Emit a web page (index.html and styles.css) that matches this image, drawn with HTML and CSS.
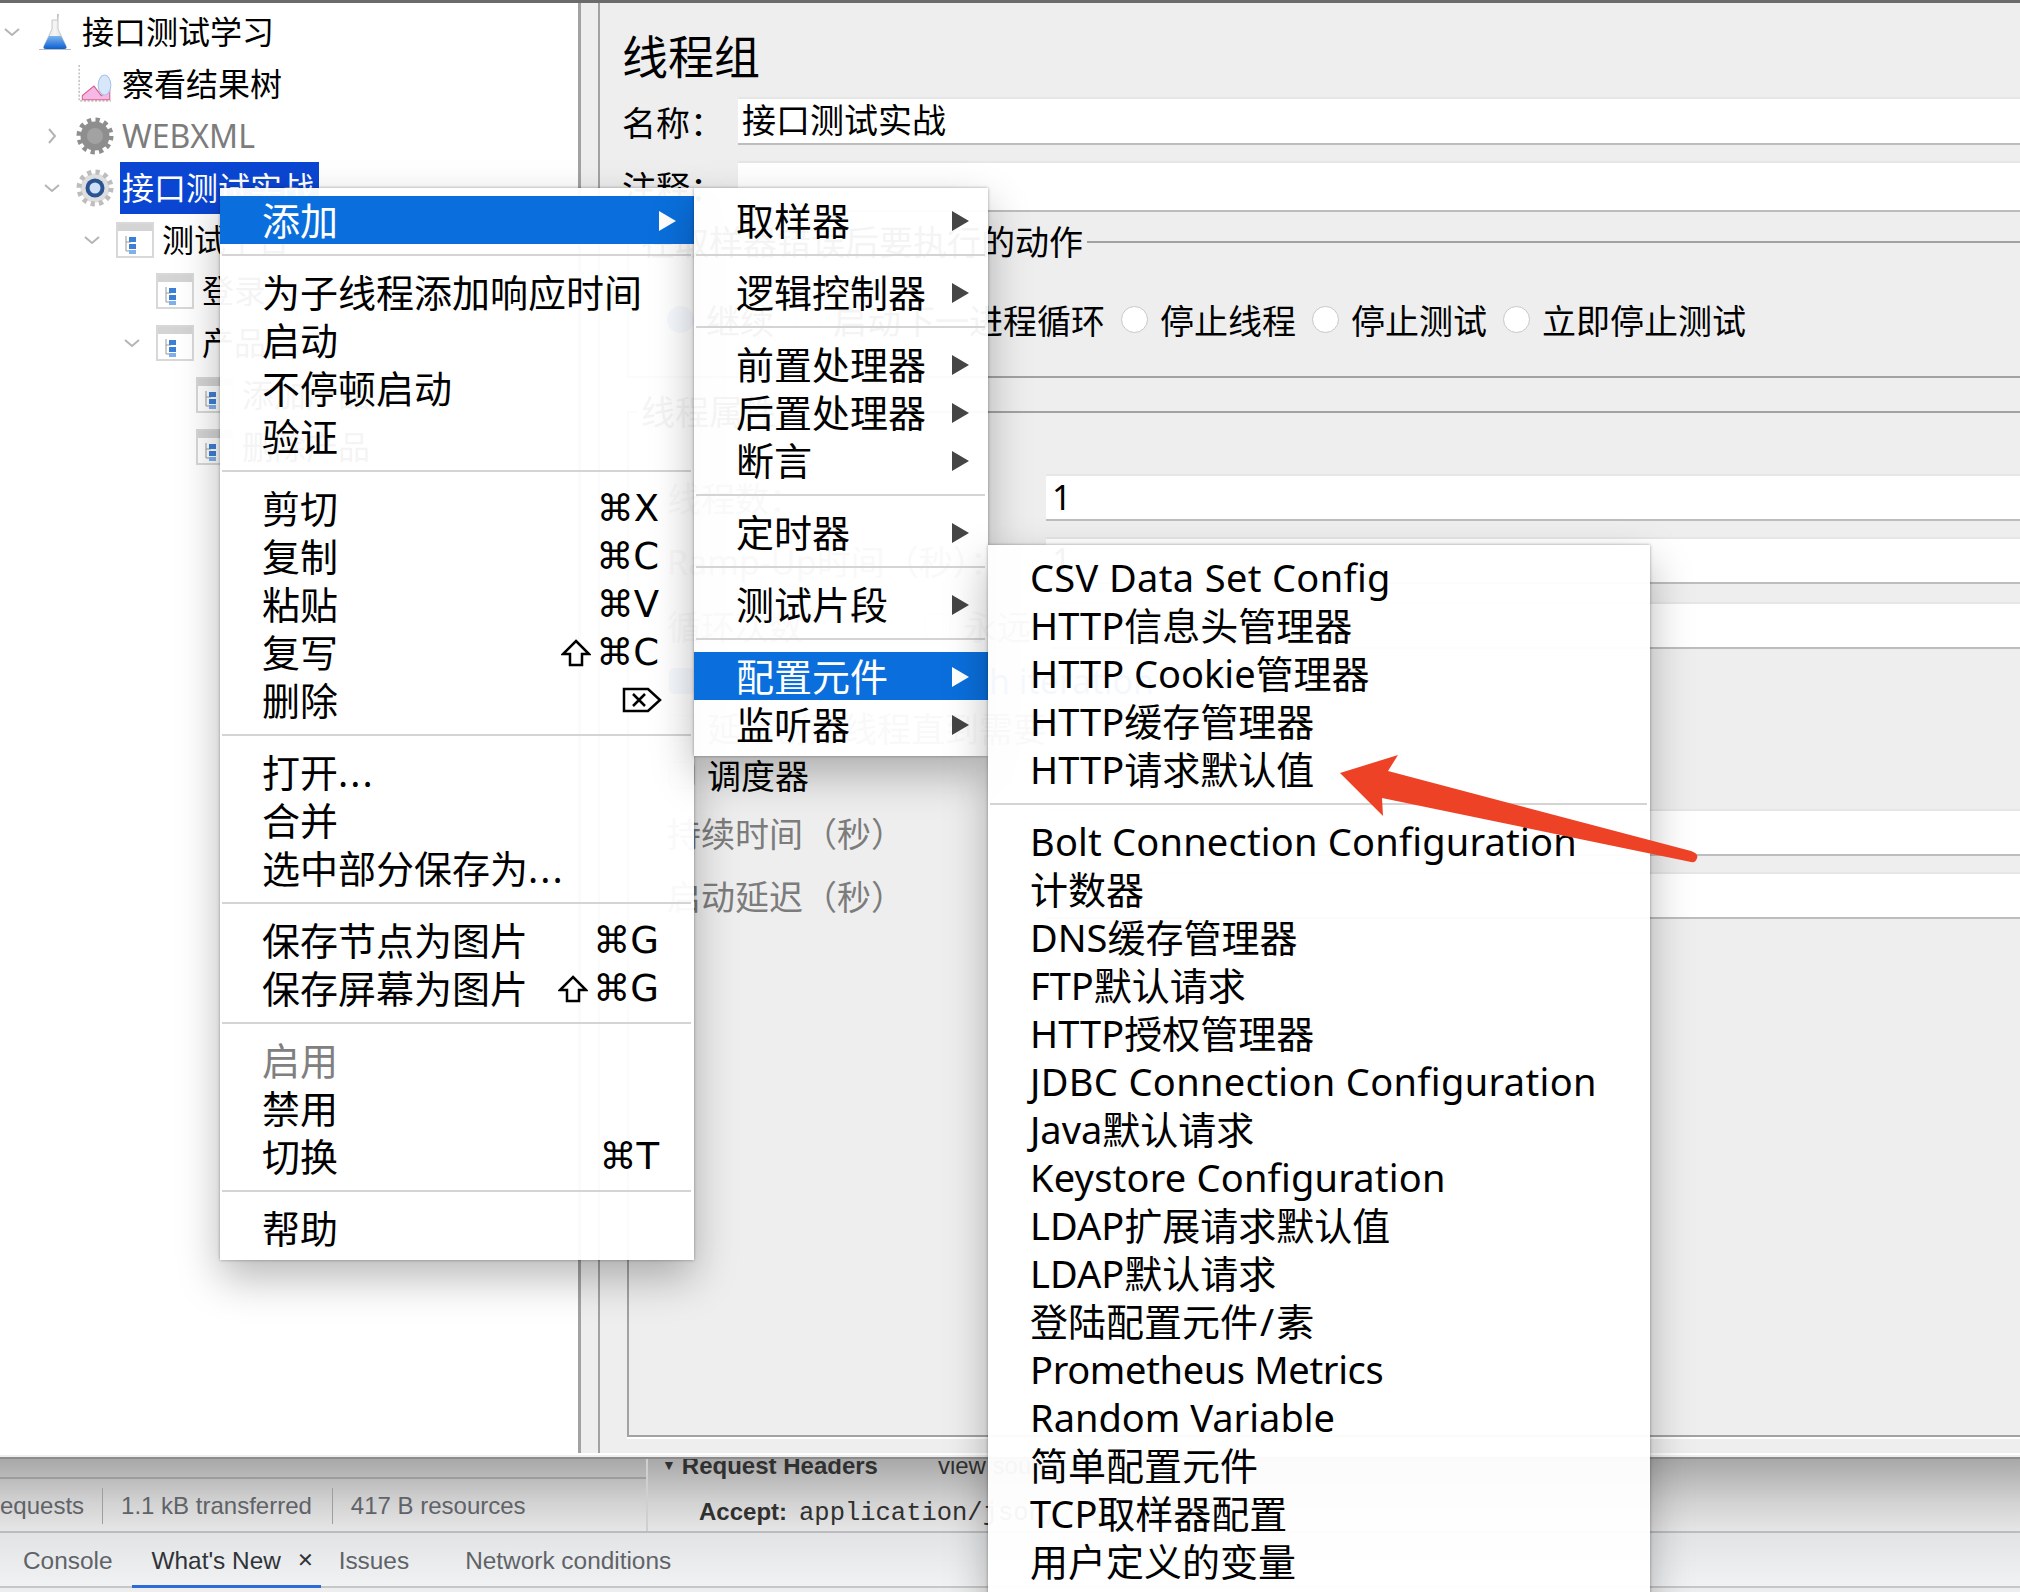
FILE: index.html
```html
<!DOCTYPE html>
<html lang="zh-CN">
<head>
  <meta charset="UTF-8" />
  <title>线程组</title>
  <link rel="stylesheet" href="styles.css">
</head>
<body>
  <svg class="defs" width="0" height="0">
    <defs>
      <linearGradient id="flaskLiquid" x1="0" y1="0" x2="0" y2="1">
        <stop offset="0" stop-color="#7db4f0"/>
        <stop offset="1" stop-color="#0b5fd0"/>
      </linearGradient>
      <linearGradient id="flaskGlass" x1="0" y1="0" x2="1" y2="0">
        <stop offset="0" stop-color="#dcdcdc"/>
        <stop offset=".5" stop-color="#f6f6f6"/>
        <stop offset="1" stop-color="#cfcfcf"/>
      </linearGradient>
      <g id="pageIcon">
        <rect x="1" y="1" width="36" height="34" fill="#fff" stroke="#d8d8d8" stroke-width="2"/>
        <rect x="2" y="2" width="34" height="7" fill="#d4d4d4"/>
        <path d="M10 14v15h5M10 20h5" fill="none" stroke="#999" stroke-width="1"/>
        <rect x="13" y="15" width="7" height="5" fill="#3d7fd6"/>
        <rect x="13" y="22" width="7" height="5" fill="#3d7fd6"/>
        <rect x="13" y="28" width="7" height="4" fill="#7fb0ea"/>
      </g>
    </defs>
  </svg>

  <div class="app">
    <div class="window">
      <div class="tree">
        <div class="row d0">
          <svg class="chev" viewBox="0 0 16 16"><path d="M1 5l7 6 7-6"/></svg>
          <svg class="icon" viewBox="0 0 38 38">
            <path d="M21 1l2 0-1 9h-1z" fill="#c4c4c4"/>
            <path d="M16 7h6v9l8 17c1 2 0 3-2 3H10c-2 0-3-1-2-3l8-17z" fill="url(#flaskGlass)" stroke="#c8c8c8"/>
            <path d="M13 23h12l5 10c1 2 0 3-2 3H10c-2 0-3-1-2-3z" fill="url(#flaskLiquid)"/>
            <path d="M3 36.500h32" stroke="#bdbdbd" stroke-width="1"/>
          </svg>
          <span class="name">接口测试学习</span>
        </div>
        <div class="row d1">
          <span class="chev-slot"></span>
          <svg class="icon" viewBox="0 0 36 36">
            <path d="M3 0v34h30" fill="none" stroke="#c4c4c4" stroke-width="1.500" stroke-dasharray="2 1.500"/>
            <path d="M6 33v-4l11-9 7 9 8-7v11z" fill="#f7b8e6" stroke="#d4608a" stroke-width="1"/>
            <ellipse cx="27" cy="19" rx="6" ry="9.500" fill="#d8e6fa" stroke="#a8c4ea" stroke-width="1"/>
          </svg>
          <span class="name">察看结果树</span>
        </div>
        <div class="row d1">
          <svg class="chev" viewBox="0 0 16 16"><path d="M5 1l6 7-6 7"/></svg>
          <svg class="icon" viewBox="0 0 38 38">
            <circle cx="19" cy="19" r="14.500" fill="#8e8e8e"/>
            <circle cx="19" cy="19" r="16" fill="none" stroke="#8e8e8e" stroke-width="5" stroke-dasharray="4.200 4.180"/>
            <circle cx="19" cy="19" r="8" fill="#a2a2a2"/>
          </svg>
          <span class="name muted">WEBXML</span>
        </div>
        <div class="row d1">
          <svg class="chev" viewBox="0 0 16 16"><path d="M1 5l7 6 7-6"/></svg>
          <svg class="icon" viewBox="0 0 38 38">
            <circle cx="19" cy="19" r="14.500" fill="#dedede"/>
            <circle cx="19" cy="19" r="16" fill="none" stroke="#bdbdbd" stroke-width="5" stroke-dasharray="4.200 4.180"/>
            <circle cx="19" cy="19" r="9.500" fill="#2a5394"/>
            <circle cx="19" cy="19" r="5.500" fill="#cfe0f6"/>
          </svg>
          <span class="name selected">接口测试实战</span>
        </div>
        <div class="row d2">
          <svg class="chev" viewBox="0 0 16 16"><path d="M1 5l7 6 7-6"/></svg>
          <svg class="icon" viewBox="0 0 38 36"><use href="#pageIcon"/></svg>
          <span class="name">测试平台</span>
        </div>
        <div class="row d3">
          <span class="chev-slot"></span>
          <svg class="icon" viewBox="0 0 38 36"><use href="#pageIcon"/></svg>
          <span class="name">登录</span>
        </div>
        <div class="row d3">
          <svg class="chev" viewBox="0 0 16 16"><path d="M1 5l7 6 7-6"/></svg>
          <svg class="icon" viewBox="0 0 38 36"><use href="#pageIcon"/></svg>
          <span class="name">产品</span>
        </div>
        <div class="row d4">
          <span class="chev-slot"></span>
          <svg class="icon" viewBox="0 0 38 36"><use href="#pageIcon"/></svg>
          <span class="name">添加产品</span>
        </div>
        <div class="row d4">
          <span class="chev-slot"></span>
          <svg class="icon" viewBox="0 0 38 36"><use href="#pageIcon"/></svg>
          <span class="name">删除产品</span>
        </div>
      </div>

      <div class="panel">
        <h1 class="title">线程组</h1>
        <div class="field">
          <label class="field-label">名称：</label>
          <div class="input">接口测试实战</div>
        </div>
        <div class="field comment">
          <label class="field-label">注释：</label>
          <div class="input"></div>
        </div>

        <fieldset class="group on-error">
          <legend>在取样器错误后要执行的动作</legend>
          <div class="radios">
            <span class="radio checked"></span><span class="first-opt">继续</span>
            <span class="radio"></span><span>启动下一进程循环</span>
            <span class="radio"></span><span>停止线程</span>
            <span class="radio"></span><span>停止测试</span>
            <span class="radio"></span><span>立即停止测试</span>
          </div>
        </fieldset>

        <fieldset class="group props">
          <legend>线程属性</legend>
          <div class="prop first">
            <span class="prop-label muted">线程数：</span>
            <div class="input">1</div>
          </div>
          <div class="prop ramp">
            <span class="prop-label muted">Ramp-Up时间（秒）：</span>
            <div class="input">1</div>
          </div>
          <div class="prop loop">
            <span class="prop-label loop-label muted">循环次数</span>
            <span class="check"></span>
            <span class="muted">永远</span>
            <div class="input"></div>
          </div>
          <div class="option"><span class="check checked"></span><span class="blue-text">Same user on each iteration</span></div>
          <div class="option"><span class="check"></span><span class="muted">延迟创建线程直到需要</span></div>
          <div class="option"><span class="check"></span><span>调度器</span></div>
          <div class="prop dur">
            <span class="prop-label muted">持续时间（秒）</span>
            <div class="input"></div>
          </div>
          <div class="prop delay">
            <span class="prop-label muted">启动延迟（秒）</span>
            <div class="input"></div>
          </div>
        </fieldset>
      </div>
    </div>

    <div class="devtools">
      <div class="net">
        <div class="net-left">
          <div class="stats">
            <span class="stat first">equests</span>
            <span class="stat">1.1 kB transferred</span>
            <span class="stat">417 B resources</span>
          </div>
        </div>
        <div class="net-right">
          <div class="req-title"><span class="tri">▼</span><b>Request Headers</b><span class="view-src">view source</span></div>
          <div class="req-line"><b>Accept:</b><span class="mono">application/json, text/plain</span></div>
        </div>
      </div>
      <div class="tabs">
        <span class="tab console">Console</span>
        <span class="tab active">What's New <i class="x">✕</i></span>
        <span class="tab issues">Issues</span>
        <span class="tab conditions">Network conditions</span>
      </div>
    </div>
  </div>

  <!-- 右键菜单 -->
  <div class="menu menu-main">
    <div class="item on">添加<i class="arrow"></i></div>
    <hr>
    <div class="item">为子线程添加响应时间</div>
    <div class="item">启动</div>
    <div class="item">不停顿启动</div>
    <div class="item">验证</div>
    <hr>
    <div class="item">剪切<kbd>⌘X</kbd></div>
    <div class="item">复制<kbd>⌘C</kbd></div>
    <div class="item">粘贴<kbd>⌘V</kbd></div>
    <div class="item">复写
      <kbd><svg class="shift" viewBox="0 0 30 28"><path d="M15 2l13 13h-7v11H9V15H2z"/></svg>⌘C</kbd>
    </div>
    <div class="item">删除
      <svg class="del" viewBox="0 0 40 26"><path d="M2 2h24l12 11-12 11H2z M11 7l12 12M23 7L11 19"/></svg>
    </div>
    <hr>
    <div class="item"><span>打开<span class="dots">...</span></span></div>
    <div class="item">合并</div>
    <div class="item"><span>选中部分保存为<span class="dots">...</span></span></div>
    <hr>
    <div class="item">保存节点为图片<kbd>⌘G</kbd></div>
    <div class="item">保存屏幕为图片
      <kbd><svg class="shift" viewBox="0 0 30 28"><path d="M15 2l13 13h-7v11H9V15H2z"/></svg>⌘G</kbd>
    </div>
    <hr>
    <div class="item off">启用</div>
    <div class="item">禁用</div>
    <div class="item">切换<kbd>⌘T</kbd></div>
    <hr>
    <div class="item">帮助</div>
  </div>

  <div class="menu menu-add">
    <div class="item">取样器<i class="arrow"></i></div>
    <hr>
    <div class="item">逻辑控制器<i class="arrow"></i></div>
    <hr>
    <div class="item">前置处理器<i class="arrow"></i></div>
    <div class="item">后置处理器<i class="arrow"></i></div>
    <div class="item">断言<i class="arrow"></i></div>
    <hr>
    <div class="item">定时器<i class="arrow"></i></div>
    <hr>
    <div class="item">测试片段<i class="arrow"></i></div>
    <hr>
    <div class="item on">配置元件<i class="arrow"></i></div>
    <div class="item">监听器<i class="arrow"></i></div>
  </div>

  <div class="menu menu-config">
    <div class="item wide">CSV Data Set Config</div>
    <div class="item">HTTP信息头管理器</div>
    <div class="item">HTTP Cookie管理器</div>
    <div class="item">HTTP缓存管理器</div>
    <div class="item">HTTP请求默认值</div>
    <hr>
    <div class="item semi">Bolt Connection Configuration</div>
    <div class="item">计数器</div>
    <div class="item">DNS缓存管理器</div>
    <div class="item">FTP默认请求</div>
    <div class="item">HTTP授权管理器</div>
    <div class="item wide">JDBC Connection Configuration</div>
    <div class="item">Java默认请求</div>
    <div class="item semi">Keystore Configuration</div>
    <div class="item">LDAP扩展请求默认值</div>
    <div class="item">LDAP默认请求</div>
    <div class="item"><span>登陆配置元件<span class="slash">/</span>素</span></div>
    <div class="item tight">Prometheus Metrics</div>
    <div class="item">Random Variable</div>
    <div class="item">简单配置元件</div>
    <div class="item">TCP取样器配置</div>
    <div class="item">用户定义的变量</div>
  </div>

  <!-- 截图上的红色箭头 -->
  <svg class="callout" viewBox="0 0 2020 1592">
    <path d="M1340 773L1398 755 1388 771 1691 851Q1699 854 1697 858 1696 863 1691 862L1382 798 1383 816z" fill="#ee4227"/>
  </svg>
</body>
</html>
```

FILE: styles.css
```css
* { box-sizing: border-box; }
html, body {
  margin: 0;
  height: 1592px;
  overflow: hidden;
}
body {
  font-family: "Noto Sans", "Noto Sans CJK SC", sans-serif;
  color: #000;
  background: #eee;
  position: relative;
}
.defs { position: absolute; }
.app {
  display: flex;
  flex-direction: column;
  height: 1592px;
}
.muted { color: #7c7c7c; }

/* top window */
.window {
  display: flex;
  height: 1459px;
  flex: none;
  background: #eee;
  border-top: 3px solid #6b6b6b;
  border-bottom: 2px solid #8c8c8c;
  padding-bottom: 2px;
  position: relative;
}
.window::after {
  content: "";
  position: absolute;
  left: 0;
  right: 0;
  bottom: 2px;
  height: 2px;
  background: #fff;
}
.tree {
  width: 581px;
  flex: none;
  background: #fff;
  border-right: 3px solid #a2a2a2;
  border-bottom: 2px solid #8c8c8c;
  padding-top: 3px;
  font-size: 32px;
}
.row {
  display: flex;
  align-items: center;
  height: 51.9px;
}
.d1 { padding-left: 40px; }
.d2 { padding-left: 80px; }
.d3 { padding-left: 120px; }
.d4 { padding-left: 160px; }
.chev, .chev-slot {
  width: 16px;
  height: 16px;
  margin: 0 31px 0 4px;
  flex: none;
}
.chev path {
  fill: none;
  stroke: #b4b4b4;
  stroke-width: 2;
}
.icon {
  width: 38px;
  height: 38px;
  margin-right: -4px;
  margin-left: -15px;
  flex: none;
}
.name {
  margin-left: 10px;
  padding: 0 2px;
  line-height: 52px;
  white-space: nowrap;
}
.selected {
  background: #0b46d3;
  color: #fff;
  padding-right: 5px;
}

/* right panel */
.panel {
  flex: 1;
  min-width: 0;
  margin-left: 17px;
  border-left: 2px solid #a2a2a2;
  border-bottom: 2px solid #8c8c8c;
  padding: 27px 0 0 22px;
  font-size: 34px;
  white-space: nowrap;
}
.title {
  margin: 0 0 15px;
  font-size: 46px;
  font-weight: 400;
  line-height: 52px;
}
.field {
  display: flex;
  align-items: center;
  height: 48px;
}
.field-label { width: 116px; flex: none; }
.input {
  flex: 1;
  height: 100%;
  padding-left: 4px;
  background: #fff;
  border-top: 2px solid #e6e6e6;
  border-bottom: 2px solid #bdbdbd;
  line-height: 42px;
}
.comment { height: 51px; margin-top: 16px; }
.group {
  margin: 8px 0 0 5px;
  min-width: 0;
  padding: 0;
  border: 0;
  border-top: 2px solid #a2a2a2;
  border-bottom: 2px solid #a2a2a2;
  border-left: 2px solid #a2a2a2;
}
.group legend {
  margin-left: 8px;
  padding: 0 4px;
  line-height: 44px;
}
.on-error { height: 158px; }
.radios {
  display: flex;
  align-items: center;
  height: 44px;
  margin-top: 33px;
  padding-left: 38px;
}
.first-opt { margin-right: 4px; }
.radio {
  width: 27px;
  height: 27px;
  margin: 0 12px 0 16px;
  border-radius: 50%;
  background: #fff;
  border: 1px solid #c8c8c8;
  flex: none;
}
.radio.checked {
  margin-left: 0;
  background: #2f7fe6;
  border-color: #2a6cc8;
}
.props {
  margin-top: 12px;
  height: 1047px;
  border-bottom: 2px solid #a2a2a2;
  box-shadow: 0 2px 0 #fff;
}
.prop {
  display: flex;
  align-items: center;
  height: 47px;
  margin-top: 16px;
}
.prop .input { padding-left: 6px; }
.prop.first { margin-top: 40px; }
.prop.loop { margin-top: 18px; }
.prop.dur { margin-top: 11px; }
.prop-label {
  width: 417px;
  flex: none;
  padding-left: 38px;
}
.loop-label { width: 296px; }
.loop .input { margin-left: 20px; }
.option {
  display: flex;
  align-items: center;
  height: 47px;
  padding-left: 40px;
}
.option:nth-child(5) { margin-top: 8px; }
.check {
  width: 26px;
  height: 26px;
  margin-right: 12px;
  background: #fff;
  border: 1px solid #c8c8c8;
  border-radius: 5px;
  flex: none;
}
.check.checked {
  background: #2f7fe6;
  border-color: #2a6cc8;
}
.blue-text { color: #0a5fc8; }

/* devtools behind the window */
.devtools {
  flex: 1;
  overflow: hidden;
  font-family: "Liberation Sans", sans-serif;
  font-size: 24px;
  color: #5f6368;
}
.net {
  display: flex;
  height: 74px;
  border-bottom: 2px solid #bbbcbf;
  background: linear-gradient(#a8a8a8, #d2d2d2 60%, #e6e6e6);
}
.net-left {
  width: 648px;
  flex: none;
  padding-top: 18px;
  border-right: 2px solid #cfcfcf;
}
.stats {
  display: flex;
  align-items: center;
  height: 56px;
  border-top: 2px solid #9d9d9d;
}
.stat {
  padding: 0 20px 0 18px;
  line-height: 36px;
  border-right: 1px solid #9e9e9e;
}
.stat.first { padding: 0 18px 0 0; }
.stat:last-child { border: 0; }
.net-right { padding-left: 14px; color: #303030; }
.req-title { margin-top: -7px; white-space: nowrap; line-height: 26px; }
.tri { font-size: 14px; margin-right: 6px; vertical-align: 4px; }
.view-src { margin-left: 60px; }
.req-line {
  margin: 20px 0 0 37px;
  white-space: nowrap;
  line-height: 26px;
}
.mono {
  margin-left: 12px;
  font-family: "Liberation Mono", monospace;
  font-size: 25.5px;
}
.tabs {
  display: flex;
  height: 55px;
  background: linear-gradient(#e1e3e5, #f1f2f3);
  border-bottom: 2px solid #c6c7c9;
  font-size: 24.4px;
}
.tab {
  line-height: 55px;
  white-space: nowrap;
}
.console { margin-left: 23px; }
.active {
  margin-left: 19px;
  padding: 0 7px 0 20px;
  height: 55px;
  color: #303338;
  border-bottom: 3px solid #2f6bd6;
}
.x { font-style: normal; font-size: 20px; margin-left: 9px; vertical-align: 2px; }
.issues { margin-left: 18px; }
.conditions { margin-left: 56px; }

/* context menus */
.menu {
  position: absolute;
  padding: 8px 0;
  background: rgba(255, 255, 255, 0.955);
  font-size: 38px;
  line-height: 48px;
  white-space: nowrap;
  box-shadow: 0 18px 40px rgba(0, 0, 0, 0.28), 0 0 3px rgba(0, 0, 0, 0.35);
}
.menu-main { left: 220px; top: 188px; width: 474px; height: 1072px; }
.menu-add { left: 694px; top: 188px; width: 294px; height: 568px; }
.menu-config { left: 988px; top: 545px; width: 662px; height: 1100px; }
.menu hr {
  height: 2px;
  margin: 10px 3px 12px 2px;
  border: 0;
  background: #d4d4d4;
}
.item {
  display: flex;
  align-items: center;
  justify-content: space-between;
  height: 48px;
  padding: 0 19px 0 42px;
}
.wide { letter-spacing: 0.35px; }
.semi { letter-spacing: 0.2px; }
.tight { letter-spacing: -0.35px; }
.dots { letter-spacing: 2px; }
.slash { padding: 0 2px; }
.menu-main .item { padding-right: 35px; }
.menu-main .item.on { padding-right: 18px; }
.item.on {
  background: #0a6fdc;
  color: #fff;
}
.item.off { color: #808080; }
.arrow {
  width: 0;
  height: 0;
  margin-top: 2px;
  border-left: 17px solid #454545;
  border-top: 10px solid transparent;
  border-bottom: 10px solid transparent;
}
.on .arrow { border-left-color: #fff; }
kbd {
  display: flex;
  align-items: center;
  margin-top: 2px;
  font-family: "DejaVu Sans", sans-serif;
  font-size: 37px;
}
.shift {
  width: 30px;
  height: 28px;
  margin-right: 5px;
}
.shift path, .del path {
  fill: none;
  stroke: #000;
  stroke-width: 2.500;
}
.del { width: 40px; height: 26px; margin-right: -3px; }
.callout {
  position: absolute;
  left: 0;
  top: 0;
  width: 2020px;
  height: 1592px;
  pointer-events: none;
}
```
